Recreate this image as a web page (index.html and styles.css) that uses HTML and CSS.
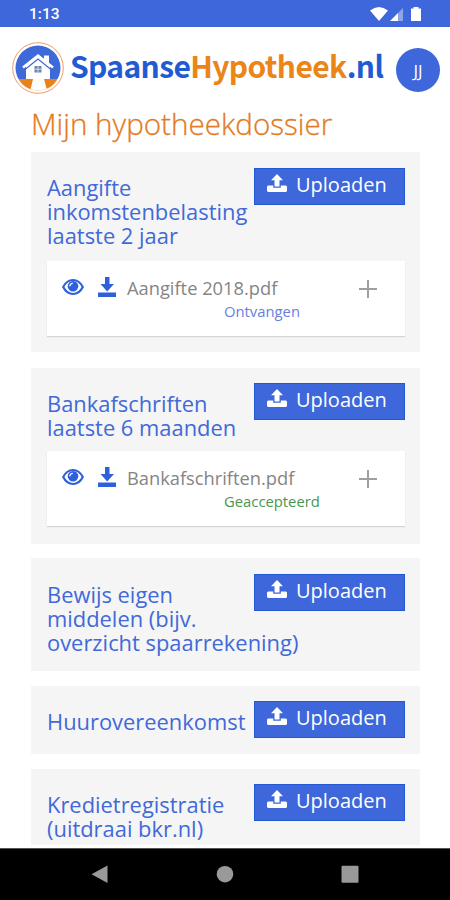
FILE: index.html
```
<!DOCTYPE html>
<html lang="nl">
<head>
<meta charset="utf-8">
<title>Mijn hypotheekdossier</title>
<link rel="stylesheet" href="styles.css">
</head>
<body>
<svg class="defs" width="0" height="0" aria-hidden="true">
  <symbol id="upload" viewBox="0 0 20 18"><path fill="currentColor" d="M10 0l6 6.200h-3.500V12.500h-5V6.200H4zM1 11.500h5.200v2.300h7.600v-2.300H19l1 1V17l-1 1H1l-1-1v-4.500z"/></symbol>
  <symbol id="download" viewBox="0 0 18 20"><path fill="currentColor" d="M7 0h4.500v7h4.500l-6.800 7.500L2.500 7H7zM0 15.500h18V20H0z"/></symbol>
  <symbol id="eye" viewBox="0 0 22 18"><path fill="none" stroke="currentColor" stroke-width="2.200" d="M1.200 9C3.500 4.500 7 2 11 2s7.500 2.500 9.800 7C18.500 13.500 15 16 11 16S3.500 13.500 1.200 9z"/><circle cx="11" cy="8.300" r="5.300" fill="currentColor"/><path fill="none" stroke="#fff" stroke-width="1.300" d="M7.800 8.300a3 3 0 0 1 3-3"/></symbol>
  <symbol id="plus" viewBox="0 0 18 18"><path stroke="currentColor" stroke-width="2" d="M9 0v18M0 9h18"/></symbol>
</svg>
<div class="statusbar">
  <span class="time">1:13</span>
  <svg class="signals" width="53" height="16" viewBox="0 0 53 16">
    <path fill="#fff" d="M0 4.500Q9 -2.500 18 4.500L9 15z"/>
    <path fill="#fff" d="M20 15L28 7v8z"/><path fill="#8ea6e9" d="M28 7l5-5v13h-5z"/>
    <path fill="#fff" d="M43.500 1h5v1.500H51V15H41V2.500h2.500z"/>
  </svg>
</div>
<header class="header">
  <svg class="logo" width="52" height="52" viewBox="0 0 52 52">
    <defs><clipPath id="disc"><circle cx="26" cy="26" r="22.500"/></clipPath></defs>
    <circle cx="26" cy="26" r="25.300" fill="#fff" stroke="#f19a65"/>
    <g clip-path="url(#disc)">
      <path fill="#3d69d9" d="M0 0h52v37H0z"/><path fill="#e98218" d="M0 37h52v15H0z"/>
      <path fill="#fff" d="M14 24l12-9.500L38 24v13h-6l4 15H17.500l3.500-15h-7z"/>
      <path fill="#fff" d="M32 13.500h5v8l-5-4z"/>
    </g>
    <path fill="none" stroke="#3d69d9" stroke-width="1.200" d="M13 27.500l13-10.500 13 10.500"/>
    <path fill="none" stroke="#fff" stroke-width="2.500" d="M11 25.500l15-12 15 12"/>
    <path fill="#6984b5" d="M22.500 24h7v6.500h-7z"/><path stroke="#fff" stroke-width=".7" d="M26 24v6.500M22.500 27.200h7"/>
  </svg>
  <div class="brand">Spaanse<span class="accent">Hypotheek</span>.nl</div>
  <div class="avatar">JJ</div>
</header>
<main class="content">
  <h1>Mijn hypotheekdossier</h1>
  <section class="card first">
    <button class="upload"><svg width="20" height="18"><use href="#upload"/></svg>Uploaden</button>
    <h2>Aangifte inkomstenbelasting laatste 2 jaar</h2>
    <div class="file">
      <svg class="eye" width="22" height="18"><use href="#eye"/></svg>
      <svg class="download" width="18" height="20"><use href="#download"/></svg>
      <div class="info"><span class="name">Aangifte 2018.pdf</span><span class="status">Ontvangen</span></div>
      <svg class="plus" width="18" height="18"><use href="#plus"/></svg>
    </div>
  </section>
  <section class="card second">
    <button class="upload"><svg width="20" height="18"><use href="#upload"/></svg>Uploaden</button>
    <h2>Bankafschriften laatste 6 maanden</h2>
    <div class="file">
      <svg class="eye" width="22" height="18"><use href="#eye"/></svg>
      <svg class="download" width="18" height="20"><use href="#download"/></svg>
      <div class="info"><span class="name">Bankafschriften.pdf</span><span class="status accepted">Geaccepteerd</span></div>
      <svg class="plus" width="18" height="18"><use href="#plus"/></svg>
    </div>
  </section>
  <section class="card third">
    <button class="upload"><svg width="20" height="18"><use href="#upload"/></svg>Uploaden</button>
    <h2>Bewijs eigen<br>middelen (bijv.<br>overzicht spaarrekening)</h2>
  </section>
  <section class="card fourth">
    <button class="upload"><svg width="20" height="18"><use href="#upload"/></svg>Uploaden</button>
    <h2>Huurovereenkomst</h2>
  </section>
  <section class="card fifth">
    <button class="upload"><svg width="20" height="18"><use href="#upload"/></svg>Uploaden</button>
    <h2>Kredietregistratie (uitdraai bkr.nl)</h2>
  </section>
</main>
<nav class="navbar">
  <svg width="450" height="52" viewBox="0 0 450 52" fill="#999">
    <path d="M91.500 26.300L107.500 17.500v17.500z"/><circle cx="225" cy="26.200" r="8.300"/><rect x="341.500" y="17.700" width="17" height="17" rx="1"/>
  </svg>
</nav>
</body>
</html>
```
FILE: styles.css
```
* { box-sizing: border-box; }
body {
  margin: 0;
  width: 450px;
  height: 900px;
  overflow: hidden;
  display: flex;
  flex-direction: column;
  background: #fff;
  font-family: "Open Sans", sans-serif;
}
.defs { display: none; }
.statusbar {
  flex: none;
  height: 27px;
  padding: 0 27px 0 29px;
  display: flex;
  align-items: center;
  justify-content: space-between;
  background: #3d67da;
  color: #fff;
}
.time { font: 500 15.500px/20px Roboto, sans-serif; padding-top: 1px; }
.header {
  flex: none;
  height: 76px;
  padding: 15px 10px 0 12px;
  display: flex;
  align-items: flex-start;
}
.logo { flex: none; }
.brand {
  flex: 1;
  margin-left: 6px;
  font: 700 30px/46px "Noto Sans CJK SC", sans-serif;
  letter-spacing: -0.630px;
  color: #215bd3;
  white-space: nowrap;
}
.accent { color: #ea8519; }
.avatar {
  flex: none;
  width: 44px;
  height: 44px;
  margin-top: 6px;
  border-radius: 50%;
  background: #3d67da;
  color: #fff;
  font-size: 17px;
  font-weight: 400;
  line-height: 45px;
  text-align: center;
}
.content {
  flex: 1;
  min-height: 0;
  margin-bottom: 3px;
  padding: 0 30px 0 31px;
  overflow: hidden;
}
h1 {
  margin: 0;
  height: 49px;
  font-size: 29.600px;
  font-weight: 300;
  line-height: 42px;
  color: #e47a22;
  -webkit-text-stroke: 0.300px #e47a22;
  white-space: nowrap;
}
.card {
  margin-bottom: 15px;
  padding: 15px 15px 0 16px;
  background: #f5f5f5;
}
.first { height: 200px; margin-bottom: 16px; padding-top: 15.500px; }
.second { height: 176px; margin-bottom: 14px; }
.third { height: 113px; padding-top: 16px; }
.fourth { height: 68px; }
.fifth { height: 100px; }
.upload {
  float: right;
  width: 151px;
  height: 37px;
  margin: 0;
  padding: 0 0 3px 12px;
  border: 1px solid #2457d3;
  display: flex;
  align-items: center;
  gap: 9px;
  background: #3d67da;
  color: #fff;
  font: 400 20px/30px "Open Sans", sans-serif;
}
.upload svg { margin-top: -4px; }
h2 {
  margin: 0;
  padding-top: 8.500px;
  font-size: 21.900px;
  font-weight: 400;
  line-height: 24.200px;
  color: #4169d8;
}
.third h2 { padding-top: 9px; }
.file {
  height: 75px;
  margin-top: 12px;
  padding: 16px 28px 0 15px;
  display: flex;
  align-items: flex-start;
  background: #fff;
  box-shadow: 0 1px 1px #d5d5d5;
  color: #2f60dc;
}
.second .file { margin-top: 11px; }
.eye { margin-top: 1px; }
.download { margin-left: 14px; }
.info {
  flex: 1;
  margin-left: 11px;
  display: flex;
  flex-direction: column;
  align-items: flex-start;
}
.name { font-size: 18.300px; line-height: 24px; margin-top: -1px; color: #858585; white-space: nowrap; }
.status { margin-left: 97px; font-size: 14.800px; line-height: 22px; color: #6680e2; }
.accepted { color: #4a9650; }
.plus { margin-top: 3px; color: #a0a0a0; }
.navbar { flex: none; height: 52px; background: #000; border-top: 1px solid #555; }
.navbar svg { display: block; margin-top: -1px; }
```
